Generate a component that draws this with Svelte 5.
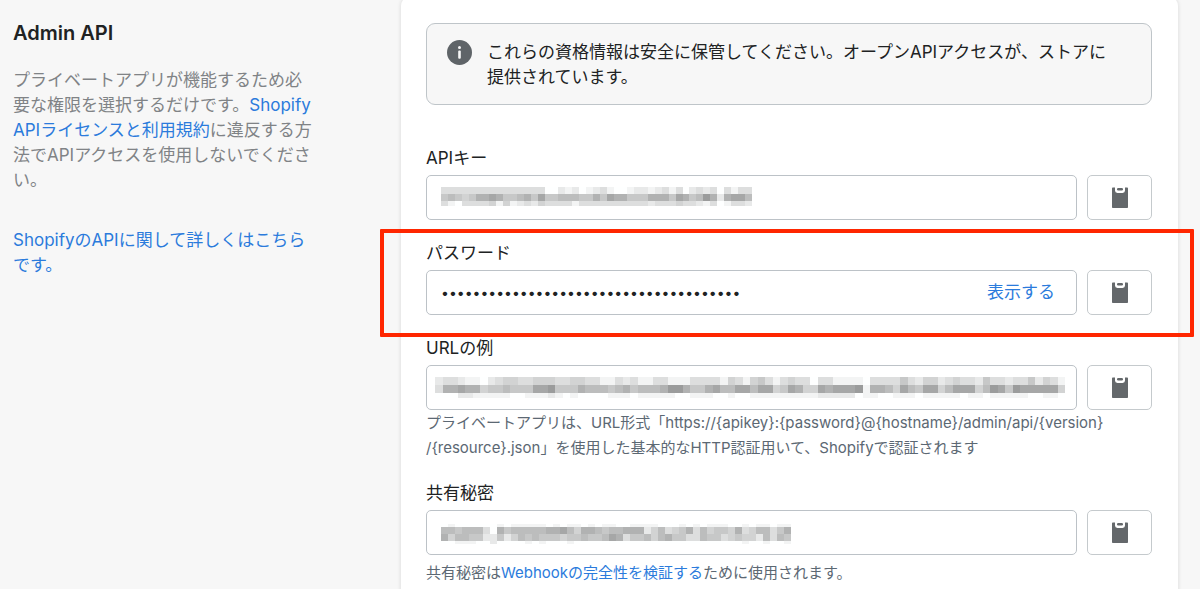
<script>
	// One digit per mosaic cell, 0 is white and 9 is the darkest grey
	const fields = [
		{
			id: 'api-key',
			label: 'APIキー',
			mosaic: {
				cell: 6.9,
				left: 15,
				tops: [12, 19, 26],
				heights: [7, 7, 5],
				rows: [
					'333333333333333002120123100122123130232303133',
					'565457787556758556665575877555777587569727886',
					'310333341412324333313333333333233343321301332'
				]
			}
		},
		{ id: 'password', label: 'パスワード', secret: true, highlighted: true },
		{
			id: 'url',
			label: 'URLの例',
			mosaic: {
				cell: 7.5,
				left: 9,
				tops: [12, 20, 28],
				heights: [8, 8, 5],
				rows: [
					'233211023443344433443311323113311133331431453134330331111033335324423433253323352431',
					'377877455655588955576665675666799755786688688458744878889177648658846888469859888884',
					'000221111100111210100001110111110011100100111111111222220110011101111101101111100110'
				]
			}
		},
		{
			id: 'shared-secret',
			label: '共有秘密',
			mosaic: {
				cell: 7,
				left: 15,
				tops: [14, 17, 24, 31],
				heights: [3, 7, 7, 3],
				rows: [
					'01000000101111101011010110011110001010111001011011',
					'66566630756666677864776566777246345736455473466357',
					'74665522524656555455655687355646755336553454426365',
					'00111002000010100010000000000000000000000001001001'
				]
			}
		}
	];

	let visible = false;

	const shade = (level) => {
		const v = 255 - level * 11;
		return `rgb(${v - 1}, ${v}, ${v})`;
	};
</script>

<div class="page">
	<aside>
		<h2>Admin API</h2>
		<p>
			プライベートアプリが機能するため必要な権限を選択するだけです。<a href="#terms">Shopify APIライセンスと利用規約</a>に違反する方法でAPIアクセスを使用しないでください。
		</p>
		<p><a href="#docs">ShopifyのAPIに関して詳しくはこちらです。</a></p>
	</aside>

	<main class="card">
		<div class="banner" role="status">
			<svg class="info" viewBox="0 0 25 25" aria-hidden="true">
				<circle cx="12.5" cy="12.5" r="12.5" fill="#5f6468" />
				<circle cx="12.5" cy="7.6" r="1.5" fill="#f7f7f7" />
				<rect x="11.2" y="10.6" width="2.6" height="8.2" rx="1" fill="#f7f7f7" />
			</svg>
			<p>これらの資格情報は安全に保管してください。オープンAPIアクセスが、ストアに提供されています。</p>
		</div>

		{#each fields as field}
			<div class="field" class:highlighted={field.highlighted}>
				<label for={field.id}>{field.label}</label>
				<div class="row">
					<div class="box">
						{#if field.secret}
							<input
								id={field.id}
								class:masked={!visible}
								type={visible ? 'text' : 'password'}
								value="shppa00000000000000000000000000000000a"
								readonly
							/>
							<button class="show" type="button" on:click={() => (visible = !visible)}>表示する</button>
						{:else}
							<input id={field.id} type="text" readonly />
							<svg class="mosaic" shape-rendering="crispEdges" aria-hidden="true">
								{#each field.mosaic.rows as row, r}
									{#each row as level, c}
										<rect
											x={field.mosaic.left + c * field.mosaic.cell}
											y={field.mosaic.tops[r]}
											width={field.mosaic.cell}
											height={field.mosaic.heights[r]}
											fill={shade(level)}
										/>
									{/each}
								{/each}
							</svg>
						{/if}
					</div>
					<button class="copy" type="button" aria-label="コピー">
						<svg viewBox="0 0 16 21" aria-hidden="true">
							<path d="M0.8 0.6H3V3.6Q3 6 5.4 6H10.6Q13 6 13 3.6V0.6H15.2Q16 0.6 16 1.4V20.2Q16 21 15.2 21H0.8Q0 21 0 20.2V1.4Q0 0.6 0.8 0.6Z" />
							<rect x="5" y="1" width="6" height="2.4" rx="1.2" />
						</svg>
					</button>
				</div>
				{#if field.id === 'url'}
					<p class="help">
						プライベートアプリは、URL形式「https://&#123;apikey&#125;:&#123;password&#125;@&#123;hostname&#125;/admin/api/&#123;version&#125;<wbr />/&#123;resource&#125;.json」を使用した基本的なHTTP認証用いて、Shopifyで認証されます
					</p>
				{:else if field.id === 'shared-secret'}
					<p class="help spaced">
						共有秘密は<a href="#webhook">Webhookの完全性を検証する</a>ために使用されます。
					</p>
				{/if}
			</div>
		{/each}
	</main>
</div>

<style>
	:global(body) {
		background: #f7f7f7;
	}

	.page {
		display: grid;
		grid-template-columns: 304fr 777fr;
		column-gap: 84px;
		box-sizing: border-box;
		height: 100vh;
		overflow: hidden;
		padding: 0 22px 0 13px;
		font-family: Inter, 'Noto Sans CJK JP', sans-serif;
		font-size: 17px;
		line-height: 25px;
		color: #202223;
	}

	a {
		color: #2b7bdc;
		text-decoration: none;
	}

	aside {
		padding-top: 21px;
	}

	h2 {
		margin: 0 0 22px;
		font-size: 20px;
		font-weight: 600;
		line-height: 25px;
	}

	aside p {
		margin: 0 0 35px;
		color: #808386;
	}

	.card {
		margin-top: -4px;
		padding: 27px 26px 40px 25px;
		background: #fff;
		border-radius: 10px;
		box-shadow: 0 0 4px rgba(23, 24, 24, 0.14);
	}

	.banner {
		display: flex;
		gap: 15px;
		margin-bottom: 40px;
		padding: 16px 32px 14px 20px;
		background: #f7f7f7;
		border: 1px solid #bfc5c9;
		border-radius: 9px;
	}

	.banner p {
		margin: 0;
	}

	.info {
		flex: none;
		width: 25px;
		height: 25px;
	}

	.field {
		margin-bottom: 20px;
	}

	.field.highlighted {
		position: relative;
	}

	.field.highlighted::after {
		content: '';
		position: absolute;
		inset: -11px -42px -22px -46px;
		border: 4px solid #ff2600;
		border-radius: 1px;
		pointer-events: none;
	}

	label {
		display: block;
		margin-bottom: 4px;
		line-height: 26px;
	}

	.row {
		display: flex;
		gap: 10px;
	}

	.box {
		position: relative;
		flex: 1;
	}

	input {
		box-sizing: border-box;
		display: block;
		width: 100%;
		height: 45px;
		padding: 0 100px 0 14px;
		border: 1px solid #bcc2c7;
		border-radius: 5px;
		background: #fff;
		color: #202223;
		font: inherit;
	}

	input.masked {
		font-size: 14px;
	}

	.mosaic {
		position: absolute;
		inset: 0;
		width: 100%;
		height: 100%;
		pointer-events: none;
	}

	.show {
		position: absolute;
		top: 10px;
		right: 22px;
		padding: 0;
		border: none;
		background: none;
		color: #2b7bdc;
		font: inherit;
		cursor: pointer;
	}

	.copy {
		display: flex;
		align-items: center;
		justify-content: center;
		box-sizing: border-box;
		width: 65px;
		height: 45px;
		padding: 0;
		border: 1px solid #c5cacd;
		border-radius: 5px;
		background: #fff;
		cursor: pointer;
	}

	.copy svg {
		width: 16px;
		height: 21px;
		fill: #64686b;
	}

	.help {
		margin: 0;
		font-size: 15px;
		color: #5c6873;
	}

	.help.spaced {
		margin-top: 5px;
	}
</style>
